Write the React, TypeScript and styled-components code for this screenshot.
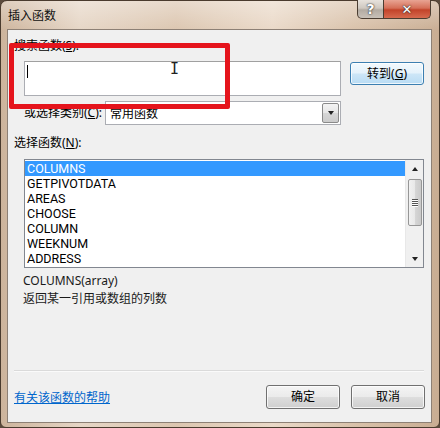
import styled, { createGlobalStyle } from 'styled-components';

const Global = createGlobalStyle`
  html, body { margin: 0; padding: 0; background: #5b4b3d; }
  body { width: 440px; height: 428px; overflow: hidden; }
`;

const uiFont = `"Noto Sans", "Noto Sans CJK SC", sans-serif`;

const Window = styled.div`
  width: 440px;
  height: 428px;
  box-sizing: border-box;
  border: 1px solid #4a3b2e;
  border-radius: 7px 7px 6px 6px;
  background:
    linear-gradient(180deg, rgba(255,255,255,0.35) 0px, rgba(255,255,255,0) 30px),
    linear-gradient(90deg, #cdb49c 0%, #e6d6c6 18%, #dcc6b0 40%, #ead9c8 62%, #d8c0a8 82%, #c9ad93 100%);
  display: flex;
  flex-direction: column;
  font-family: ${uiFont};
  font-size: 12px;
  color: #000;
`;

const TitleBar = styled.div`
  height: 28px;
  display: flex;
  align-items: flex-start;
  padding-left: 7px;
`;

const Title = styled.div`
  margin-top: 6px;
  font-size: 12px;
  line-height: 18px;
  color: #111;
`;

const CaptionButtons = styled.div`
  margin-left: auto;
  margin-right: 8px;
  margin-top: -1px;
  display: flex;
`;

const CaptionButton = styled.div<{ $close?: boolean }>`
  width: ${p => (p.$close ? 47 : 27)}px;
  height: 19px;
  box-sizing: border-box;
  border: 1px solid #4b3d31;
  border-top: none;
  border-left-width: ${p => (p.$close ? 0 : 1)}px;
  border-radius: ${p => (p.$close ? '0 0 5px 0' : '0 0 0 5px')};
  background: ${p =>
    p.$close
      ? 'linear-gradient(180deg, #e8a493 0%, #d56f58 45%, #c2432a 55%, #d66a4e 100%)'
      : 'linear-gradient(180deg, #e7e2dc 0%, #cfc8c0 45%, #b3aba2 55%, #c9c1b8 100%)'};
  display: flex;
  align-items: center;
  justify-content: center;
  color: #fff;
  font-family: "DejaVu Sans", sans-serif;
  font-weight: bold;
  font-size: ${p => (p.$close ? 13 : 14)}px;
  text-shadow: 0 0 2px #333, 0 0 1px #222;
`;

const Panel = styled.div`
  position: relative;
  margin: 0 7px 0 6px;
  height: 394px;
  box-sizing: border-box;
  border: 1px solid #8d8075;
  background: #f0f0f0;
  padding: 8px 6px 0 6px;
  display: flex;
  flex-direction: column;
`;

const Label = styled.div<{ $indent?: number }>`
  height: 16px;
  line-height: 16px;
  margin-left: ${p => p.$indent ?? 0}px;
  white-space: nowrap;
  u { text-decoration: underline; }
`;

const Row = styled.div<{ $top: number }>`
  display: flex;
  align-items: flex-start;
  margin-top: ${p => p.$top}px;
`;

const SearchBox = styled.div`
  margin-left: 10px;
  width: 317px;
  height: 35px;
  box-sizing: border-box;
  border: 1px solid #abadb3;
  border-top-color: #a0a0a0;
  background: #fff;
  position: relative;
`;

const Caret = styled.div`
  position: absolute;
  left: 2px;
  top: 3px;
  width: 1px;
  height: 13px;
  background: #000;
`;

const IBeam = styled.div`
  position: absolute;
  left: 145px;
  top: 0px;
  font-family: "DejaVu Sans Mono", monospace;
  font-size: 15px;
  line-height: 15px;
  color: #222;
`;

const Button = styled.div<{ $default?: boolean }>`
  width: 74px;
  height: 24px;
  box-sizing: border-box;
  border: 1px solid ${p => (p.$default ? '#3c7fb1' : '#707070')};
  border-radius: 3px;
  background: ${p =>
    p.$default
      ? 'linear-gradient(180deg, #f2f9fd 0%, #e5f2fb 48%, #cde6f7 52%, #b9dcf4 100%)'
      : 'linear-gradient(180deg, #f4f4f4 0%, #ebebeb 48%, #dddddd 52%, #cfcfcf 100%)'};
  box-shadow: inset 0 0 0 1px rgba(255, 255, 255, 0.75);
  display: flex;
  align-items: center;
  justify-content: center;
  line-height: 16px;
  u { text-decoration: underline; }
`;

const Select = styled.div`
  width: 236px;
  height: 24px;
  box-sizing: border-box;
  border: 1px solid #abadb3;
  background: #fff;
  display: flex;
  align-items: center;
  padding-left: 4px;
`;

const DropButton = styled.div`
  margin-left: auto;
  width: 17px;
  height: 20px;
  margin-right: 1px;
  box-sizing: border-box;
  border: 1px solid #8a8a8a;
  border-radius: 2px;
  background: linear-gradient(180deg, #f3f3f3 0%, #e6e6e6 50%, #d6d6d6 51%, #cbcbcb 100%);
  display: flex;
  align-items: center;
  justify-content: center;
`;

const Triangle = styled.div<{ $up?: boolean }>`
  width: 0;
  height: 0;
  border-left: 3.5px solid transparent;
  border-right: 3.5px solid transparent;
  ${p => (p.$up ? 'border-bottom: 4px solid #222;' : 'border-top: 4px solid #222;')}
`;

const List = styled.div`
  margin-top: 8px;
  margin-left: 10px;
  width: 400px;
  height: 109px;
  box-sizing: border-box;
  border: 1px solid #828790;
  background: #fff;
  display: flex;
`;

const Items = styled.div`
  flex: 1;
  padding-top: 1px;
  font-family: Roboto, "Noto Sans", sans-serif;
  font-size: 12.5px;
`;

const Item = styled.div<{ $selected?: boolean }>`
  height: 15px;
  line-height: 15px;
  padding-left: 2px;
  background: ${p => (p.$selected ? '#3399ff' : 'transparent')};
  color: ${p => (p.$selected ? '#fff' : '#000')};
`;

const ScrollBar = styled.div`
  width: 17px;
  background: #f0f0f0;
  border-left: 1px solid #e8e8e8;
  display: flex;
  flex-direction: column;
  align-items: center;
`;

const ArrowBox = styled.div`
  height: 17px;
  width: 17px;
  display: flex;
  align-items: center;
  justify-content: center;
`;

const Thumb = styled.div`
  width: 14px;
  height: 47px;
  margin-top: 2px;
  box-sizing: border-box;
  border: 1px solid #969696;
  border-radius: 2px;
  background: linear-gradient(90deg, #f1f1f1 0%, #e8e8e8 50%, #d6d6d6 51%, #cacaca 100%);
  display: flex;
  flex-direction: column;
  align-items: center;
  justify-content: center;
  gap: 1px;
`;

const Grip = styled.div`
  width: 6px;
  height: 1px;
  background: #555;
  box-shadow: 0 1px 0 #fff;
`;

const Spacer = styled.div`
  flex: 1;
`;

const Info = styled.div<{ $top: number }>`
  margin-top: ${p => p.$top}px;
  margin-left: 9px;
  line-height: 16px;
  height: 16px;
  color: #1a1a1a;
`;

const Separator = styled.div`
  margin-top: 63px;
  height: 1px;
  background: #dadada;
  box-shadow: 0 1px 0 #fafafa;
  width: 410px;
`;

const Footer = styled.div`
  margin-top: 14px;
  display: flex;
  align-items: center;
  gap: 11px;
`;

const HelpLink = styled.a`
  color: #0066cc;
  text-decoration: underline;
  margin-right: auto;
  cursor: pointer;
`;

const Highlight = styled.div`
  position: absolute;
  left: 1px;
  top: 13px;
  width: 221px;
  height: 66px;
  box-sizing: border-box;
  border: 5px solid #e5141c;
  border-radius: 2px;
  pointer-events: none;
`;

const functions = ['COLUMNS', 'GETPIVOTDATA', 'AREAS', 'CHOOSE', 'COLUMN', 'WEEKNUM', 'ADDRESS'];

export default function App() {
  return (
    <>
      <Global />
      <Window>
        <TitleBar>
          <Title>插入函数</Title>
          <CaptionButtons>
            <CaptionButton>?</CaptionButton>
            <CaptionButton $close>✕</CaptionButton>
          </CaptionButtons>
        </TitleBar>
        <Panel>
          <Label>搜索函数(<u>S</u>):</Label>
          <Row $top={7}>
            <SearchBox>
              <Caret />
              <IBeam>I</IBeam>
            </SearchBox>
            <Button $default style={{ marginLeft: 9, marginTop: 1, height: 23 }}>
              转到(<u>G</u>)
            </Button>
          </Row>
          <Row $top={5}>
            <Label $indent={10} style={{ width: 81, marginTop: 4 }}>
              或选择类别(<u>C</u>):
            </Label>
            <Select>
              常用函数
              <DropButton>
                <Triangle />
              </DropButton>
            </Select>
          </Row>
          <Label style={{ marginTop: 10 }}>
            选择函数(<u>N</u>):
          </Label>
          <List>
            <Items>
              {functions.map((f, i) => (
                <Item key={f} $selected={i === 0}>
                  {f}
                </Item>
              ))}
            </Items>
            <ScrollBar>
              <ArrowBox>
                <Triangle $up />
              </ArrowBox>
              <Thumb>
                <Grip />
                <Grip />
                <Grip />
                <Grip />
              </Thumb>
              <Spacer />
              <ArrowBox>
                <Triangle />
              </ArrowBox>
            </ScrollBar>
          </List>
          <Info $top={5}>COLUMNS(array)</Info>
          <Info $top={2}>返回某一引用或数组的列数</Info>
          <Separator />
          <Footer>
            <HelpLink>有关该函数的帮助</HelpLink>
            <Button>确定</Button>
            <Button>取消</Button>
          </Footer>
          <Highlight />
        </Panel>
      </Window>
    </>
  );
}
